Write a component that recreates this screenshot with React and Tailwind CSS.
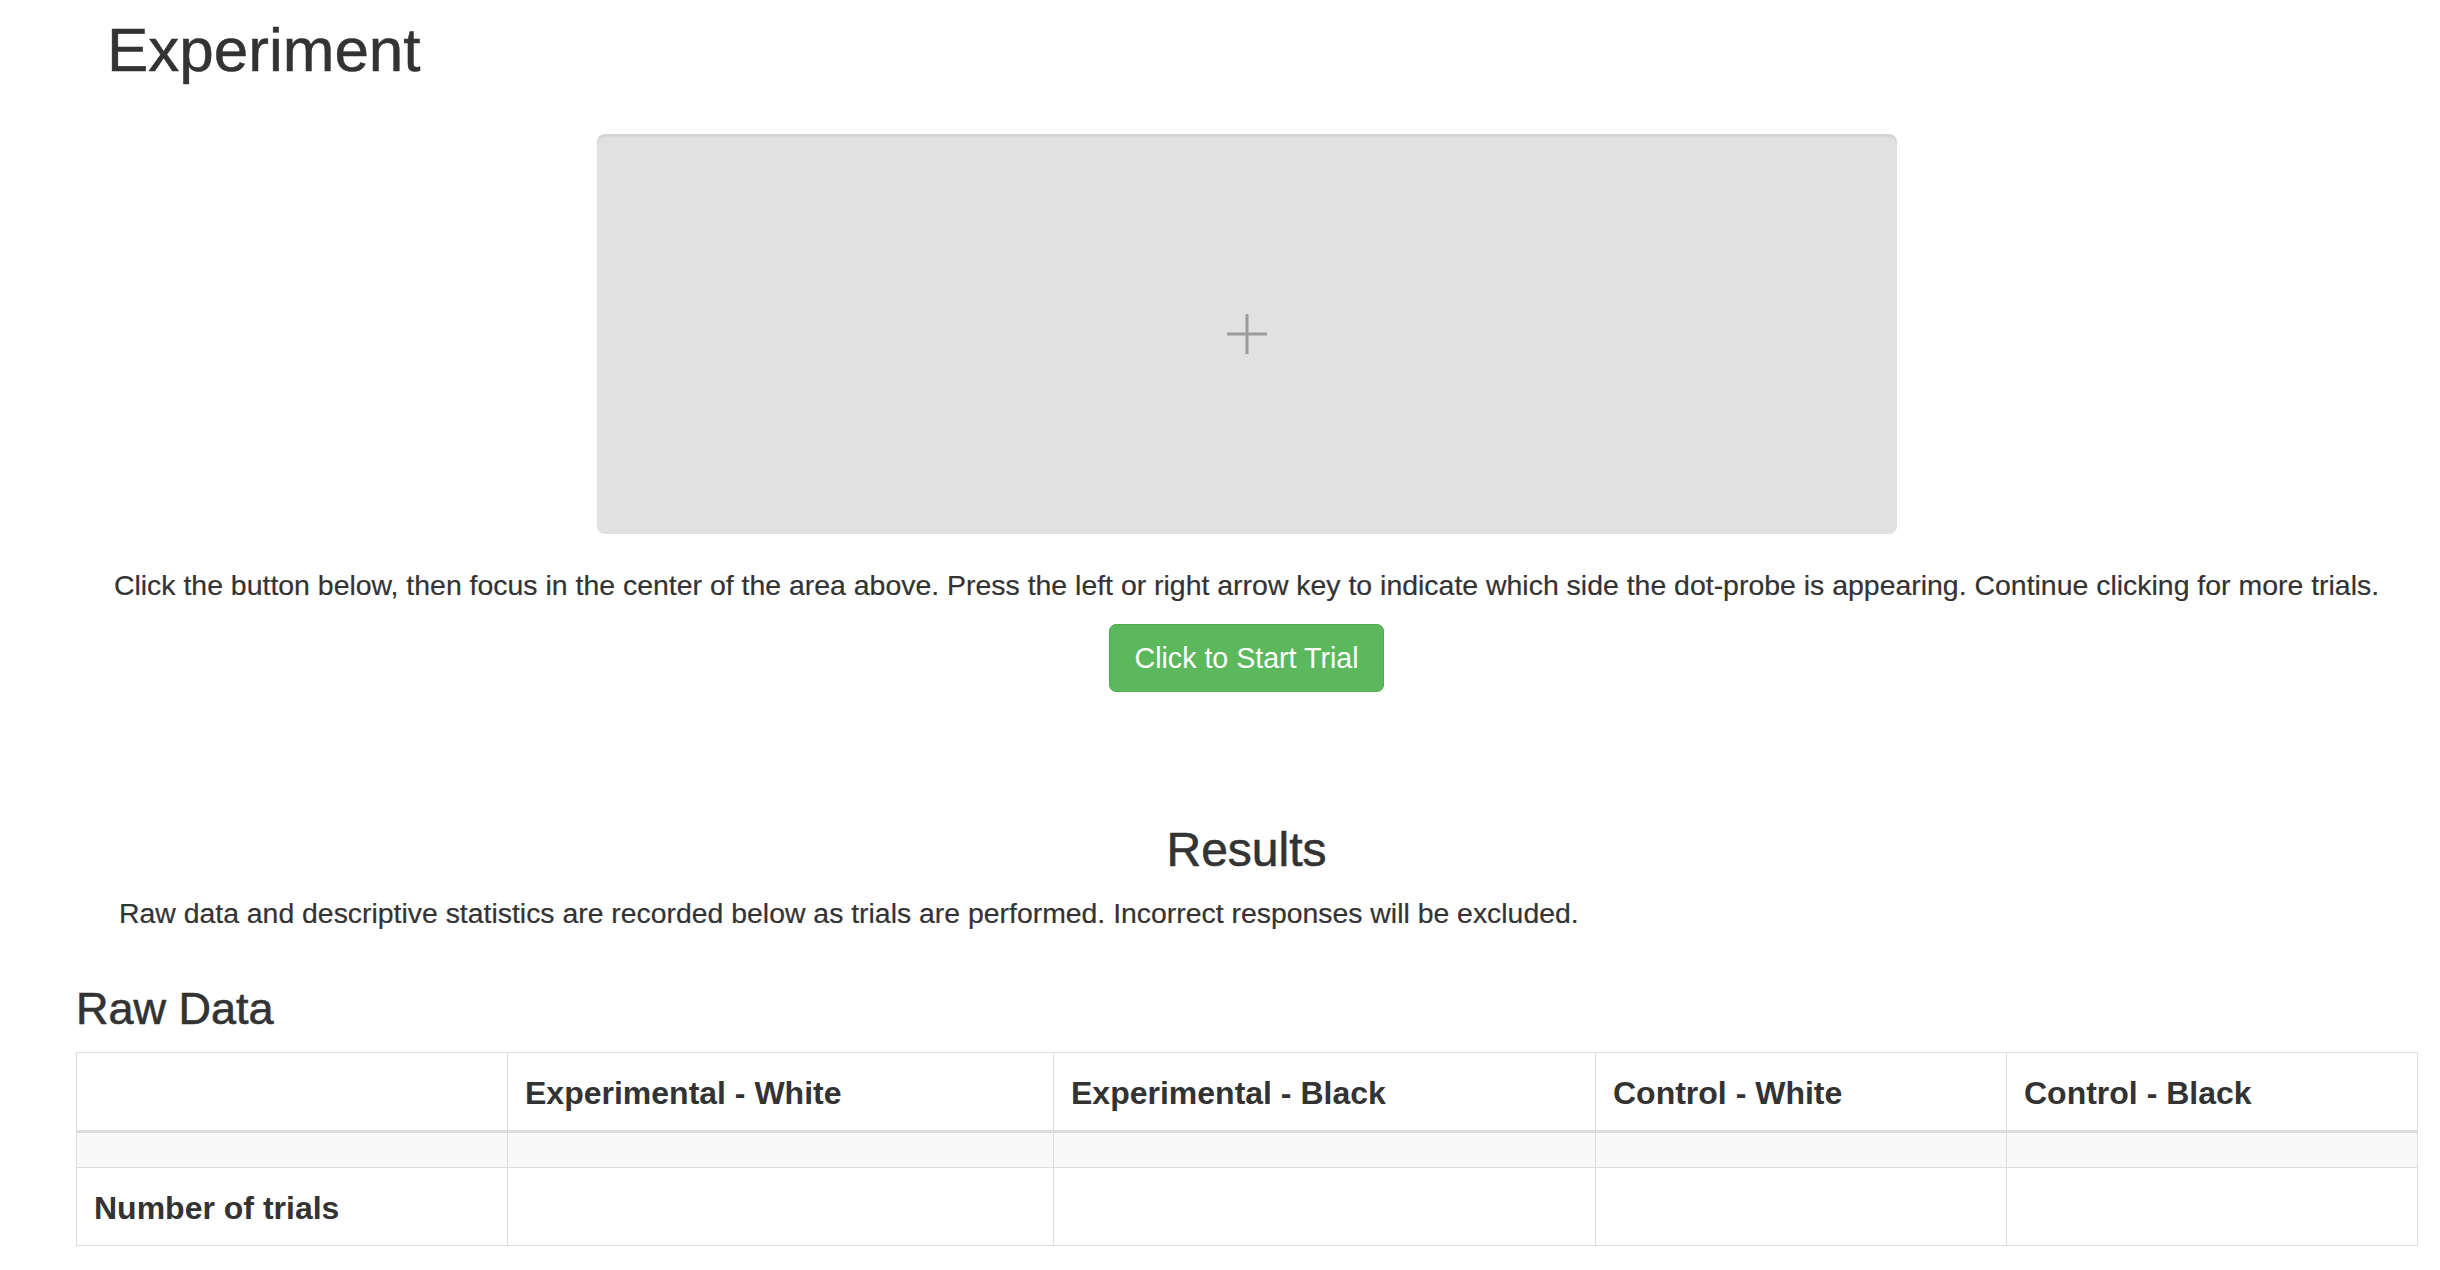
import React from 'react';

const columns = [
  { label: '', width: 'w-[431px]' },
  { label: 'Experimental - White', width: 'w-[546px]' },
  { label: 'Experimental - Black', width: 'w-[542px]' },
  { label: 'Control - White', width: 'w-[411px]' },
  { label: 'Control - Black', width: 'w-[411px]' },
];

const Fixation = () => (
  <svg width="40" height="40" viewBox="0 0 40 40">
    <line x1="20" y1="0" x2="20" y2="40" stroke="#9b9b9b" strokeWidth="3" />
    <line x1="0" y1="20" x2="40" y2="20" stroke="#9b9b9b" strokeWidth="3" />
  </svg>
);

const RawDataTable = () => (
  <table className="w-[2341px] table-fixed border-collapse border border-[#dddddd] text-[32px] text-[#333333]">
    <colgroup>
      {columns.map((col, i) => (
        <col key={i} className={col.width} />
      ))}
    </colgroup>
    <thead>
      <tr>
        {columns.map((col, i) => (
          <th
            key={i}
            className="h-[79px] border border-b-[3px] border-[#dddddd] px-[17px] pt-[2px] text-left align-middle font-bold"
          >
            {col.label}
          </th>
        ))}
      </tr>
    </thead>
    <tbody>
      <tr className="bg-[#f9f9f9]">
        {columns.map((col, i) => (
          <td key={i} className="h-[36px] border border-[#dddddd] p-0" />
        ))}
      </tr>
      <tr>
        <td className="h-[78px] border border-[#dddddd] px-[17px] pt-[2px] align-middle font-bold">
          Number of trials
        </td>
        {columns.slice(1).map((col, i) => (
          <td key={i} className="h-[78px] border border-[#dddddd] px-[17px]" />
        ))}
      </tr>
    </tbody>
  </table>
);

export default function App() {
  return (
    <div className="min-h-[1270px] bg-white font-['Liberation_Sans',Arial,sans-serif] text-[#333333]">
      <div className="ml-[76px] w-[2341px] pt-[16px]">
        <h1 className="pl-[31px] text-[62px] leading-[68px] font-normal [-webkit-text-stroke:0.5px_#333333]">
          Experiment
        </h1>

        <div className="mt-[50px] flex justify-center">
          <div className="flex h-[400px] w-[1300px] items-center justify-center rounded-[8px] bg-[#e1e1e1] shadow-[inset_0_3px_2px_rgba(0,0,0,0.06)]">
            <Fixation />
          </div>
        </div>

        <p className="mt-[31px] text-center text-[28.45px] leading-[40px] [-webkit-text-stroke:0.2px_#333333]">
          Click the button below, then focus in the center of the area above. Press the left or right arrow key to indicate which side the dot-probe is appearing. Continue clicking for more trials.
        </p>

        <div className="mt-[19px] flex justify-center">
          <button className="flex h-[68px] w-[275px] items-center justify-center rounded-[7px] border border-[#4cae4c] bg-[#5cb85c] text-[28.6px] text-white">
            Click to Start Trial
          </button>
        </div>

        <h2 className="mt-[131px] text-center text-[48px] leading-[53px] font-medium [-webkit-text-stroke:0.6px_#333333]">
          Results
        </h2>
        <p className="mt-[17px] pl-[43px] text-[28.4px] leading-[40px] [-webkit-text-stroke:0.2px_#333333]">
          Raw data and descriptive statistics are recorded below as trials are performed. Incorrect responses will be excluded.
        </p>

        <h3 className="mt-[52px] text-[45px] leading-[48px] font-medium [-webkit-text-stroke:0.6px_#333333]">
          Raw Data
        </h3>
        <div className="mt-[19px]">
          <RawDataTable />
        </div>
      </div>
    </div>
  );
}
